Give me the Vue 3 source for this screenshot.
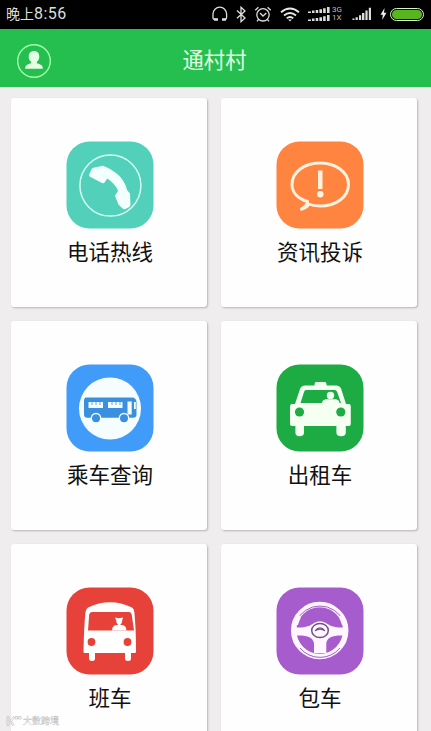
<script setup>
const services = [
  { id: 'phone', label: '电话热线', color: '#52d0ba' },
  { id: 'news', label: '资讯投诉', color: '#ff8440' },
  { id: 'query', label: '乘车查询', color: '#409cf8' },
  { id: 'taxi', label: '出租车', color: '#1dab43' },
  { id: 'shuttle', label: '班车', color: '#e64239' },
  { id: 'charter', label: '包车', color: '#a65ccd' },
]
</script>

<template>
  <div class="screen">
    <div class="status">
      <span class="time">晚上<span class="digits">8:56</span></span>
      <svg class="s-head" width="18" height="16" viewBox="0 0 18 16" fill="none" stroke="#ddd">
        <path d="M5.5 13.3H3.2Q2 13.3 2 11.5V8a6.8 6.8 0 0 1 13.6 0v3.5q0 1.8-1.2 1.8H12" stroke-width="1.3" />
        <path d="M3 13.5h4M11 13.5h4" stroke-width="2.4" />
      </svg>
      <svg class="s-bt" width="11" height="17" viewBox="0 0 11 17" fill="none" stroke="#ddd" stroke-width="1.3">
        <path d="M1 4.5l8 7.5-4 3.7V1.2L9 5 1 12.3" />
      </svg>
      <svg class="s-alarm" width="18" height="17" viewBox="0 0 18 17" fill="none" stroke="#ddd" stroke-width="1.3">
        <circle cx="9" cy="8.8" r="6.2" />
        <path d="M1.3 4.2L4.4 1.2M16.7 4.2l-3.1-3M6 7l3 3 3.3-3M4.5 13.5L3 15.3M13.5 13.5l1.5 1.8" />
      </svg>
      <svg class="s-wifi" width="20" height="15" viewBox="0 0 20 15" fill="none" stroke="#e8e8e8" stroke-width="1.9">
        <path d="M1 5.3q9-7.4 18 0M4 8.4q6-5 12 0M6.8 11.2q3.2-2.6 6.4 0" />
        <path d="M8.2 12.4h3.6L10 14.4z" fill="#e8e8e8" stroke="none" />
      </svg>
      <svg class="s-dual" width="24" height="16" viewBox="0 0 24 16" fill="#ddd">
        <path d="M1 5.6h3V7H1zM5 4.6h2.500V7H5zM8.700 4h2.500v3H8.700zM12.400 3.200H15V7h-2.600zM16.100 2.200h2.600V7h-2.600zM20 1h2.600v6H20zM1 13.600h3V15H1zM5 12.600h2.500V15H5zM8.700 12h2.500v3H8.700zM12.400 11.200H15V15h-2.600zM16.100 10.200h2.600V15h-2.600zM20 9h2.600v6H20z" />
      </svg>
      <span class="net"><span>3G</span><span>1X</span></span>
      <svg class="s-sig" width="20" height="14" viewBox="0 0 20 14" fill="#ddd">
        <path d="M.5 11.5h2V13h-2zM3.6 10.3h2.2V13H3.600zM7 8.300h2.200V13H7zM10 6h2.400v7H10zM13.400 3.400h2.200V13h-2.200zM16.800.8h2.200V13h-2.200z" />
      </svg>
      <svg class="s-bolt" width="7" height="12" viewBox="0 0 7 12"><path d="M4.6 0L.5 6.800h2.300L2.200 12l4.300-7.300H4z" fill="#eee" /></svg>
      <span class="battery"></span>
    </div>

    <header class="bar">
      <svg class="avatar" width="36" height="36" viewBox="0 0 36 36">
        <circle cx="18" cy="18" r="16.300" fill="none" stroke="#a5ffae" stroke-width="1.400" />
        <path d="M18 8c3.300 0 5.300 2.300 5.300 5.400 0 2.400-1 4.300-2.500 5.400v1.400c2.500.8 4.800 1.500 5.600 3.100.3.700.4 1.500.4 2.400H9.200c0-.9.1-1.700.4-2.400.8-1.600 3.100-2.300 5.600-3.100v-1.400c-1.500-1.100-2.500-3-2.500-5.400C12.700 10.300 14.700 8 18 8z" fill="#e4ffe3" />
      </svg>
      <h1 class="title">通村村</h1>
    </header>

    <main class="grid">
      <section v-for="s in services" :key="s.id" class="card">
        <svg class="icon" width="88" height="88" viewBox="0 0 88 88">
          <rect x=".5" y=".5" width="87" height="87" rx="23" :fill="s.color" />

          <g v-if="s.id === 'phone'">
            <circle cx="44.400" cy="44.600" r="30.500" fill="none" stroke="#d3fff5" stroke-width="1.500" />
            <path d="M23.200 33.800L25.500 28.200Q26 27 27.500 26.700L37 24.700Q47 28.500 54 35.500Q60 43 61 49L64 52.500L64.500 63.500Q64.400 65.500 62.800 66.300L59.500 67.900Q57.200 68.700 56 67L52.500 63.500L49.200 55.500Q49 54.500 49.700 53.500L52 50Q49.500 43 41.300 37.600L38.500 41.500Q37.500 42.700 36 42L24 35.700Q22.800 35 23.200 33.800Z" fill="#f3fffc" />
          </g>

          <g v-else-if="s.id === 'news'">
            <path d="M31.500 60.500C21.500 57.500 16 51 16 43.500C16 31 28.500 22 44 22S72.500 31 72.500 43.500S60 65 44 65Q37 65 32.500 63Q31.500 67 24.500 68.500Q31.500 64.500 31.500 60.500Z" fill="none" stroke="#fff3df" stroke-width="3" />
            <path d="M42 29.500h4.500V48H42z" fill="#fff3df" />
            <circle cx="44.300" cy="53.300" r="3.200" fill="#fff3df" />
          </g>

          <g v-else-if="s.id === 'query'">
            <circle cx="44" cy="44.500" r="31" fill="#f5fdff" />
            <path d="M20 33.500H66Q70 33.500 70.500 38V50.500Q70.500 53.800 67 53.800H21Q18 53.800 18 50V37Q18 33.500 20 33.500Z" fill="#3b8fdf" />
            <g fill="#f5fdff">
              <rect x="22.500" y="38" width="14.500" height="6" />
              <rect x="42" y="38" width="14.500" height="6" />
              <rect x="61.500" y="37.500" width="4.200" height="13" />
              <rect x="68" y="38" width="1.800" height="7" />
              <circle cx="30" cy="54" r="5.300" /><circle cx="58" cy="54" r="5.300" />
            </g>
            <path d="M26 38v3M30 38v3M34 38v3M46 38v3M50 38v3M54 38v3" stroke="#3b8fdf" stroke-width=".8" />
            <circle cx="30" cy="54.300" r="4" fill="#3b8fdf" /><circle cx="58" cy="54.300" r="4" fill="#3b8fdf" />
          </g>

          <g v-else-if="s.id === 'taxi'">
            <path d="M40 18h9q1.500 0 1.700 3.500H60q4 0 5.200 3.500L70 40h3q1.800 0 1.800 3v17q0 2-2 2h-3v6.500q0 3.800-4.700 3.800t-4.700-3.800V62H28v6.500q0 3.800-4.300 3.800T19.400 68.500V62H16q-2 0-2-2V43q0-3 2-3h3l5-15q1.300-3.500 5-3.500h9.500Q38.500 18 40 18Z" fill="#f5fff2" />
            <path d="M30 26H58.500q2 0 2.700 2L65 39H24.500L28 28q.6-2 2-2Z" fill="#1dab43" />
            <path d="M46 39.200q0-3.300 4.200-4h9.600q3.700.7 3.700 4Z" fill="#f5fff2" />
            <circle cx="54.500" cy="31.500" r="3.700" fill="#f5fff2" />
            <circle cx="23.500" cy="48" r="4.600" fill="#1dab43" /><circle cx="64.800" cy="48" r="4.600" fill="#1dab43" />
          </g>

          <g v-else-if="s.id === 'shuttle'">
            <path d="M22 20.500Q44 10 66 20.500Q68 21.500 68.300 25Q70 40 70 65Q70 66 68.500 66H65v5.500q0 2.500-3 2.500t-3-2.500V66H29v5.500q0 2.500-3 2.500t-3-2.500V66H18.500Q17.500 66 17.500 65Q18 38 19.500 25Q20 21.500 22 20.500Z" fill="#fff" />
            <path d="M26 25H63q2.500 0 2.700 2.500L68 43.500H22L23.200 27.500Q23.500 25 26 25Z" fill="#e64239" />
            <path d="M46 43.500q0-5.500 5.200-5.500h1q-2-1.500-2-4.500L49 30.500l4 .8 4-.8-.8 3q0 3-2 4.500h1.200q5 0 5 5.500Z" fill="#fff" />
            <circle cx="25.500" cy="55" r="3.900" fill="#e64239" /><circle cx="61.500" cy="55" r="3.900" fill="#e64239" />
          </g>

          <g v-else>
            <circle cx="43.700" cy="43.500" r="26" fill="none" stroke="#fff6ff" stroke-width="5.500" />
            <path d="M20 35A26 26 0 0 1 68 35" fill="none" stroke="#a65ccd" stroke-width="1" />
            <path d="M24 61A26 26 0 0 0 64 61" fill="none" stroke="#a65ccd" stroke-width="1" />
            <path d="M16.500 38L23 28.500Q26 30 23.500 33.500L22 38ZM71.500 38L65 28.500Q62 30 64.500 33.500L66 38ZM20 40.500C29 41 34 39 38 36Q44 32.500 50 36C54 39 59 41 68 40.500V48.500C57 48 51.500 50 50.300 56V66H38V56C36.500 50 31 48 20 48.500Z" fill="#fff6ff" />
            <ellipse cx="44" cy="43.500" rx="8.300" ry="7" fill="#fff6ff" stroke="#70518a" stroke-width="1.500" />
            <path d="M39 43.800Q44 37.800 49 43.800Q44 40.500 39 43.800Z" fill="none" stroke="#70518a" stroke-width="1.100" />
          </g>
        </svg>
        <div class="label">{{ s.label }}</div>
      </section>
    </main>

    <div class="mark">
      <svg width="16" height="12" viewBox="0 0 16 12" fill="none" stroke="#c4c4c4" stroke-width=".8">
        <path d="M1 1.500h2v9H1zM4 5.500L7.500 1.500 8.500 3 5.500 6.500 8 9.500 6.500 10.500zM9 1.500h2.500v2.500H9zM12.500 1.500H15v2.500h-2.500z" />
      </svg>
      <span>大数跨境</span>
    </div>
  </div>
</template>

<style>
body {
  overflow: hidden;
  background: #efedee;
}
</style>

<style scoped>
.screen {
  position: relative;
  width: 431px;
  height: 731px;
  overflow: hidden;
  background: #efedee;
  font-family: Roboto, "Noto Sans CJK SC", sans-serif;
}
.status {
  display: flex;
  align-items: center;
  box-sizing: border-box;
  height: 29px;
  padding: 0 7px 1px 6px;
  background: #000;
  color: #ddd;
}
.status svg,
.net,
.battery {
  flex: none;
}
.time {
  width: 205px;
  flex: none;
  font-size: 14px;
  line-height: 27px;
  white-space: nowrap;
}
.digits {
  font-size: 16px;
  letter-spacing: .5px;
}
.s-bt { margin-left: 7px; }
.s-alarm { margin-left: 7px; }
.s-wifi { margin-left: 8px; }
.s-dual { margin-left: 7px; }
.net {
  display: flex;
  flex-direction: column;
  width: 12px;
  margin-left: 1px;
  font-size: 8px;
  line-height: 8px;
  color: #bbb;
}
.s-sig { margin-left: 8px; }
.s-bolt { margin-left: 8px; }
.battery {
  box-sizing: border-box;
  width: 34px;
  height: 13px;
  margin-left: 3px;
  padding: 1px;
  border: 1px solid #d9f5c8;
  border-radius: 7px;
  background: #58b51f content-box;
}
.bar {
  display: grid;
  grid-template-columns: 1fr auto 1fr;
  align-items: center;
  height: 58px;
  background: #24bf4f;
}
.avatar {
  margin: 6px 0 0 16px;
}
.title {
  margin: 5px 2px 0 0;
  font-size: 21.3px;
  line-height: 30px;
  font-weight: 400;
  color: #e6ffe4;
}
.grid {
  display: grid;
  grid-template-columns: 196px 196px;
  grid-auto-rows: 209px;
  gap: 14px;
  padding: 11px 0 0 11px;
}
.card {
  display: flex;
  flex-direction: column;
  align-items: center;
  box-sizing: border-box;
  padding: 43px 0 0 2px;
  border-radius: 3px;
  background: #fefefe;
  box-shadow: 1px 1px 2px #b8b4b6;
}
.label {
  margin-top: 8px;
  font-size: 21.5px;
  line-height: 32px;
  color: #111;
}
.mark {
  position: absolute;
  left: 6px;
  bottom: 3px;
  display: flex;
  align-items: center;
  gap: 1px;
  font-size: 9px;
  line-height: 14px;
  color: #fff;
  -webkit-text-stroke: .4px #c4c4c4;
}
</style>
